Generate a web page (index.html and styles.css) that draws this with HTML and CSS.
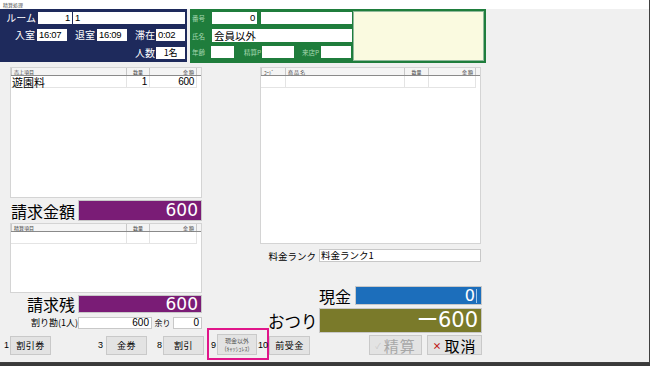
FILE: index.html
```html
<!DOCTYPE html>
<html lang="ja">
<head>
<meta charset="utf-8">
<title>精算処理</title>
<link rel="stylesheet" href="styles.css">
</head>
<body>
<div class="window">
  <div class="titlebar">精算処理</div>
  <div class="top">
    <div class="navy">
      <div class="nrow">
        <span class="nlabel w36">ルーム</span>
        <span class="ninput num right w34 ml2">1</span>
        <span class="ninput num w112 ml1">1</span>
      </div>
      <div class="nrow">
        <span class="nlabel w35">入室</span>
        <span class="ninput num w30 ml2">16:07</span>
        <span class="nlabel w28">退室</span>
        <span class="ninput num w30 ml2">16:09</span>
        <span class="nlabel w28">滞在</span>
        <span class="ninput num w29 ml1">0:02</span>
      </div>
      <div class="nrow r3">
        <span class="nlabel w28">人数</span>
        <span class="ninput num w29 ml1 center">1名</span>
      </div>
    </div>
    <div class="green">
      <div class="gfields">
        <div class="grow">
          <span class="glabel w20">番号</span>
          <span class="ginput num right w45">0</span>
          <span class="ginput w91 ml4"></span>
        </div>
        <div class="grow">
          <span class="glabel w20">氏名</span>
          <span class="ginput name w140">会員以外</span>
        </div>
        <div class="grow">
          <span class="glabel w19">年齢</span>
          <span class="ginput w23"></span>
          <span class="glabel w28 right pr1">精算P</span>
          <span class="ginput w32"></span>
          <span class="glabel w27 right pr2">来店P</span>
          <span class="ginput w30"></span>
        </div>
      </div>
      <div class="memo"></div>
    </div>
  </div>

  <div class="main">
    <div class="leftcol">
      <div class="list l1">
        <div class="lhead cols-a">
          <span>売上項目</span><span class="c">数量</span><span class="r">金 額</span>
        </div>
        <div class="lrow cols-a">
          <span class="item">遊園料</span><span class="r num">1</span><span class="r num">600</span>
        </div>
      </div>
      <div class="amount a1">
        <span class="biglabel w68">請求金額</span>
        <span class="valbox purple">600</span>
      </div>
      <div class="list l2">
        <div class="lhead cols-a">
          <span>精算項目</span><span class="c">数量</span><span class="r">金 額</span>
        </div>
        <div class="lrow cols-a">
          <span></span><span></span><span></span>
        </div>
      </div>
      <div class="amount a2">
        <span class="biglabel w68 right">請求残</span>
        <span class="valbox purple">600</span>
      </div>
      <div class="split">
        <span class="slabel">割り勘(1人)</span>
        <span class="sinput w74">600</span>
        <span class="slabel2">余り</span>
        <span class="sinput w29">0</span>
      </div>
    </div>

    <div class="rightcol">
      <div class="list l3">
        <div class="lhead cols-b">
          <span>ｺｰﾄﾞ</span><span>商 品 名</span><span class="c">数量</span><span class="r">金 額</span>
        </div>
        <div class="lrow cols-b">
          <span></span><span></span><span></span><span></span>
        </div>
      </div>
      <div class="rank">
        <span class="rlabel">料金ランク</span>
        <span class="rinput">料金ランク1</span>
      </div>
      <div class="cash">
        <span class="biglabel cashlabel">現金</span>
        <span class="valbox blue">0<i class="caret"></i></span>
      </div>
      <div class="change">
        <span class="biglabel chlabel">おつり</span>
        <span class="valbox olive">ー600</span>
      </div>
    </div>
  </div>

  <div class="buttons">
    <span class="key k1">1</span>
    <span class="btn">割引券</span>
    <span class="key k3">3</span>
    <span class="btn">金券</span>
    <span class="key k8">8</span>
    <span class="btn">割引</span>
    <div class="highlight">
      <span class="key k9">9</span>
      <span class="btn small">現金以外<br>(ｷｬｯｼｭﾚｽ)</span>
      <span class="key k10">10</span>
    </div>
    <span class="btn">前受金</span>
    <span class="btn big disabled"><span class="chk">✓</span>精算</span>
    <span class="btn big cancel"><span class="x">×</span>取消</span>
  </div>
</div>
</body>
</html>
```

FILE: styles.css
```css
* { box-sizing: border-box; margin: 0; padding: 0; }
html, body { width: 650px; height: 366px; overflow: hidden; }
body {
  background: #3a3a3a;
  font-family: "Noto Sans CJK JP", "Liberation Sans", sans-serif;
  color: #000;
}
.window {
  width: 650px;
  height: 363px;
  background: #f0f0f0;
  border-right: 1px solid #404040;
  border-bottom: 1px solid #404040;
  display: flex;
  flex-direction: column;
}
.titlebar {
  height: 9px;
  background: #fff;
  font-size: 5px;
  line-height: 9px;
  padding-left: 3px;
  color: #555;
}
.top { display: flex; height: 54px; }

/* navy panel */
.navy {
  width: 187px;
  height: 53px;
  background: #1e2a5c;
  padding-top: 3px;
  display: flex;
  flex-direction: column;
  gap: 5px;
}
.nrow { display: flex; align-items: center; height: 12px; }
.nrow.r3 { margin-top: 1px; padding-left: 127px; }
.nlabel { color: #fff; font-size: 10px; line-height: 12px; text-align: right; white-space: nowrap; }
.ninput {
  background: #fff;
  height: 12px;
  line-height: 12px;
  padding: 0 2px;
  font-size: 9.5px;
  white-space: nowrap;
  overflow: hidden;
}
.num { font-family: "Liberation Sans", sans-serif; letter-spacing: -0.3px; }
.right { text-align: right; }
.center { text-align: center; font-family: "Noto Sans CJK JP", sans-serif; font-size: 9px; }
.ml1 { margin-left: 1px; }
.ml2 { margin-left: 2px; }
.ml4 { margin-left: 4px; }
.pr1 { padding-right: 1px; }
.pr2 { padding-right: 2px; }
.w19 { width: 19px; } .w20 { width: 20px; } .w23 { width: 23px; }
.w27 { width: 27px; } .w28 { width: 28px; } .w29 { width: 29px; }
.w30 { width: 30px; } .w32 { width: 32px; } .w34 { width: 34px; }
.w35 { width: 35px; } .w36 { width: 36px; } .w45 { width: 45px; }
.w68 { width: 68px; } .w74 { width: 74px; } .w91 { width: 91px; }
.w112 { width: 112px; } .w140 { width: 140px; }

/* green panel */
.green {
  width: 296px;
  height: 54px;
  margin-left: 3px;
  background: #1f7d3c;
  padding: 2px;
  display: flex;
}
.gfields {
  width: 161px;
  padding-top: 1px;
  display: flex;
  flex-direction: column;
  gap: 5px;
}
.grow { display: flex; align-items: center; height: 12px; }
.grow:nth-child(2) { height: 13px; margin-bottom: -1px; }
.glabel { font-size: 6.5px; color: #a6d8b1; line-height: 12px; white-space: nowrap; }
.ginput {
  background: #fff;
  height: 12px;
  line-height: 12px;
  font-size: 9.5px;
  padding: 0 2px;
}
.grow:nth-child(2) .ginput { height: 13px; }
.ginput.name { font-size: 10.5px; line-height: 13px; }
.memo {
  width: 131px;
  height: 50px;
  background: #fafae0;
  border: 1px solid #8fb99a;
}

/* main */
.main { display: flex; margin-top: 4px; padding-left: 10px; height: 266px; }
.leftcol { width: 192px; display: flex; flex-direction: column; }
.rightcol { width: 222px; margin-left: 58px; display: flex; flex-direction: column; }

.list {
  background: #fff;
  border: 1px solid #d4d4d4;
}
.l1 { height: 131px; }
.l2 { height: 70px; margin-top: 2px; }
.l3 { height: 177px; width: 221px; }
.lhead, .lrow { display: grid; }
.cols-a { grid-template-columns: 116px 23px 47px; }
.cols-b { grid-template-columns: 25px 119px 24px 47px; }
.lhead {
  height: 8px;
  background: #f4f4f4;
  border-bottom: 1px solid #8a8a8a;
}
.lhead span {
  font-size: 5px;
  line-height: 7px;
  height: 7px;
  color: #444;
  padding: 0 2px;
  border-right: 1px solid #c8c8c8;
  white-space: nowrap;
}
.lhead span:first-child { border-left: 1px solid #c8c8c8; }
.c { text-align: center; }
.r { text-align: right; }
.lrow { height: 12px; }
.lrow span {
  border-right: 1px solid #e4e4e4;
  border-bottom: 1px solid #e4e4e4;
  font-size: 10px;
  line-height: 11px;
  height: 12px;
  padding: 0 2px;
}
.lrow .item { font-size: 11px; line-height: 12px; padding-left: 1px; }
.lrow .num { font-size: 10px; }

.amount { display: flex; align-items: center; margin-top: 2px; }
.a1 { height: 21px; }
.a2 { height: 18px; }
.biglabel { font-size: 16px; line-height: 18px; white-space: nowrap; }
.a1 .biglabel { padding-left: 1px; }
.a2 .biglabel { padding-right: 3px; }
.valbox {
  color: #fff;
  font-family: "DejaVu Sans", sans-serif;
  text-align: right;
  padding-right: 3px;
  border: 1px solid #c8c8c8;
  height: 100%;
}
.purple {
  flex: 1;
  background: #7a1c76;
  font-size: 17px;
  line-height: 19px;
}
.a2 .purple { line-height: 16px; }

.split { display: flex; align-items: center; height: 12px; margin-top: 4px; }
.slabel { width: 68px; font-size: 9px; text-align: right; line-height: 12px; white-space: nowrap; }
.sinput {
  height: 12px;
  background: #fff;
  border: 1px solid #c8c8c8;
  font-family: "Liberation Sans", sans-serif;
  font-size: 10px;
  line-height: 10px;
  text-align: right;
  padding-right: 2px;
}
.slabel2 { width: 21px; font-size: 8px; text-align: center; line-height: 12px; }

.rank { display: flex; align-items: center; height: 13px; margin-top: 5px; }
.rlabel { width: 59px; font-size: 9.5px; text-align: right; padding-right: 3px; white-space: nowrap; }
.rinput {
  width: 162px;
  height: 13px;
  background: #fff;
  border: 1px solid #c8c8c8;
  font-size: 9.5px;
  line-height: 11px;
  padding-left: 1px;
}
.cash { display: flex; align-items: center; height: 19px; margin-top: 24px; }
.cashlabel { width: 95px; text-align: right; padding-right: 4px; }
.blue {
  width: 127px;
  background: #1c6ebb;
  font-size: 16px;
  line-height: 17px;
  padding-right: 4px;
}
.caret {
  display: inline-block;
  width: 1px;
  height: 14px;
  background: #9fc6ea;
  margin-left: 1px;
  vertical-align: -2px;
}
.change { display: flex; align-items: center; height: 25px; margin-top: 3px; }
.chlabel { width: 59px; text-align: left; padding-left: 8px; font-size: 16.5px; }
.olive {
  width: 163px;
  background: #7a7a2a;
  font-size: 21px;
  line-height: 23px;
  padding-right: 3px;
}

/* buttons */
.buttons { display: flex; align-items: center; height: 20px; margin-top: 2px; }
.key { font-family: "Liberation Sans", sans-serif; font-size: 9px; color: #000; }
.k1 { width: 10px; padding-left: 4px; }
.k3 { width: 55px; text-align: right; padding-right: 3px; }
.k8 { width: 16px; text-align: right; padding-right: 1px; }
.k9 { width: 8px; padding-left: 2px; }
.k10 { width: 10px; padding-left: 1px; }
.btn {
  width: 41px;
  height: 19px;
  background: #e3e3e3;
  border: 1px solid #c9c9c9;
  font-size: 9px;
  letter-spacing: 0.5px;
  display: flex;
  align-items: center;
  justify-content: center;
  white-space: nowrap;
}
.highlight {
  display: flex;
  align-items: center;
  width: 62px;
  height: 32px;
  margin: -6px 0 -4px 3px;
  border: 2px solid #e0168a;
  padding-top: 1px;
}
.btn.small {
  font-size: 6px;
  line-height: 8px;
  letter-spacing: 0;
  text-align: center;
  color: #555;
  height: 21px;
}
.btn.big { height: 20px; font-size: 15px; letter-spacing: 1px; }
.btn.disabled { width: 53px; margin-left: 59px; color: #a8a8a8; }
.chk { font-size: 8px; color: #c8c8c8; margin-right: 2px; }
.btn.cancel { width: 55px; margin-left: 5px; }
.x { color: #c01818; font-size: 9px; margin-right: 2px; font-weight: bold; }
```
